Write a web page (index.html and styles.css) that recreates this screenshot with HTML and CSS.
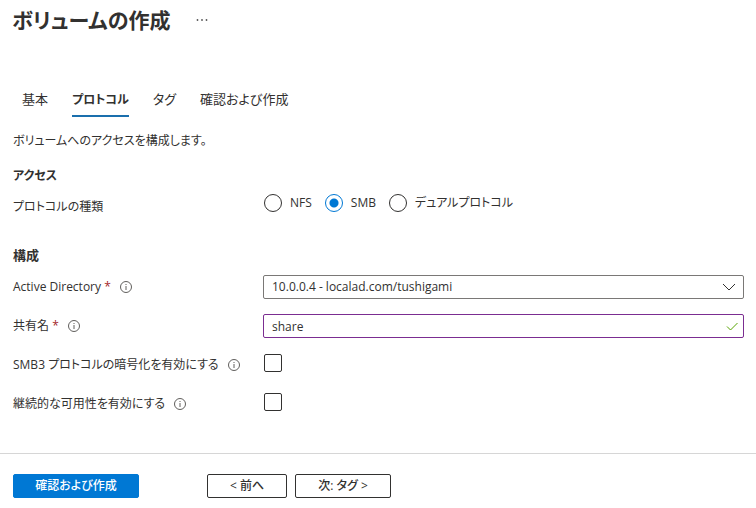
FILE: index.html
```html
<!DOCTYPE html>
<html lang="ja">
<head>
    <meta charset="UTF-8">
    <meta name="viewport" content="width=device-width, initial-scale=1.0">
    <title>ボリュームの作成</title>
    <link rel="stylesheet" href="styles.css">
</head>
<body>
    <header class="page-header">
        <h1>ボリュームの作成</h1>
        <button type="button" class="more" aria-label="その他">
            <svg width="12" height="4" viewBox="0 0 12 4" fill="#555"><circle cx="1.5" cy="2" r="0.9"/><circle cx="6" cy="2" r="0.9"/><circle cx="10.5" cy="2" r="0.9"/></svg>
        </button>
    </header>
    <nav class="tabs">
        <a href="#basic">基本</a>
        <a href="#protocol" class="active">プロトコル</a>
        <a href="#tags">タグ</a>
        <a href="#review">確認および作成</a>
    </nav>
    <form>
        <main>
            <p class="description">ボリュームへのアクセスを構成します。</p>
            <section class="access">
                <h2>アクセス</h2>
                <div class="row" role="radiogroup" aria-labelledby="protocol-label">
                    <span class="label" id="protocol-label">プロトコルの種類</span>
                    <div class="radios">
                        <label><input type="radio" name="protocol" value="nfs">NFS</label>
                        <label><input type="radio" name="protocol" value="smb" checked>SMB</label>
                        <label><input type="radio" name="protocol" value="dual">デュアルプロトコル</label>
                    </div>
                </div>
            </section>
            <section class="settings">
                <h2>構成</h2>
                <div class="row">
                    <div class="label">
                        <label for="directory">Active Directory <span class="required">*</span></label>
                        <svg class="info" viewBox="0 0 12 12"><circle cx="6" cy="6" r="5.5"/><path d="M6 5v4M6 3v1"/></svg>
                    </div>
                    <div class="field">
                        <select id="directory" name="directory">
                            <option>10.0.0.4 - localad.com/tushigami</option>
                        </select>
                        <svg class="chevron" viewBox="0 0 14 8"><path d="M1 1l6 6 6-6"/></svg>
                    </div>
                </div>
                <div class="row">
                    <div class="label">
                        <label for="share">共有名 <span class="required">*</span></label>
                        <svg class="info" viewBox="0 0 12 12"><circle cx="6" cy="6" r="5.5"/><path d="M6 5v4M6 3v1"/></svg>
                    </div>
                    <div class="field">
                        <input type="text" id="share" name="share" value="share" class="edited">
                        <svg class="valid" viewBox="0 0 12 9"><path d="M1 4.5l3.5 3.5 7-7"/></svg>
                    </div>
                </div>
                <div class="row">
                    <div class="label">
                        <label for="encryption">SMB3 プロトコルの暗号化を有効にする</label>
                        <svg class="info" viewBox="0 0 12 12"><circle cx="6" cy="6" r="5.5"/><path d="M6 5v4M6 3v1"/></svg>
                    </div>
                    <input type="checkbox" id="encryption" name="encryption">
                </div>
                <div class="row">
                    <div class="label">
                        <label for="availability">継続的な可用性を有効にする</label>
                        <svg class="info" viewBox="0 0 12 12"><circle cx="6" cy="6" r="5.5"/><path d="M6 5v4M6 3v1"/></svg>
                    </div>
                    <input type="checkbox" id="availability" name="availability">
                </div>
            </section>
        </main>
        <footer>
            <button type="submit" class="btn primary">確認および作成</button>
            <button type="button" class="btn previous">&lt; 前へ</button>
            <button type="button" class="btn next">次: タグ &gt;</button>
        </footer>
    </form>
</body>
</html>
```
FILE: styles.css
```css
* {
    box-sizing: border-box;
}
body {
    margin: 0;
    font-family: "Open Sans", "Noto Sans CJK JP", sans-serif;
    font-size: 12px;
    line-height: 20px;
    font-feature-settings: "palt";
    color: #323130;
    background-color: #fff;
}
h1, h2, p {
    margin: 0;
}
input, select, button {
    font: inherit;
    font-feature-settings: inherit;
    color: inherit;
    margin: 0;
}
.page-header {
    display: flex;
    align-items: center;
    gap: 20px;
    height: 40px;
    padding: 0 12px;
}
h1 {
    font-size: 21px;
    line-height: 38px;
    font-weight: 600;
}
.more {
    display: flex;
    padding: 6px;
    border: none;
    background: none;
}
.tabs {
    display: flex;
    gap: 24px;
    padding: 49px 22px 0;
    font-size: 13px;
}
.tabs a {
    height: 28px;
    color: inherit;
    text-decoration: none;
}
.tabs .active {
    font-size: 12px;
    line-height: 22px;
    font-weight: 600;
    border-bottom: 2px solid #1a6fad;
}
main {
    padding: 14px 12px 0 13px;
}
h2 {
    font-size: 12px;
    line-height: 20px;
    font-weight: 600;
}
.access {
    padding-top: 15px;
}
.access .row {
    margin-top: 7px;
}
.access .label {
    line-height: 28px;
}
.settings {
    display: flex;
    flex-direction: column;
    gap: 10px;
    padding-top: 24px;
}
.settings h2 {
    font-size: 13px;
}
.row {
    display: grid;
    grid-template-columns: 250px 1fr;
    min-height: 24px;
}
.settings .row + .row {
    margin-top: 5px;
}
.label {
    display: flex;
    align-items: center;
    gap: 9px;
    line-height: 24px;
}
.required {
    color: #a4262c;
}
.info {
    width: 12px;
    height: 12px;
    fill: none;
    stroke: #605e5c;
}
.radios {
    display: flex;
    align-items: flex-start;
    gap: 12px;
}
.radios label {
    display: flex;
    gap: 7px;
    line-height: 20px;
}
input[type="radio"] {
    appearance: none;
    width: 18px;
    height: 18px;
    margin: 1px;
    border: 1px solid #323130;
    border-radius: 50%;
}
input[type="radio"]:checked {
    border-color: #0078d4;
    background: radial-gradient(circle, #0078d4 4px, transparent 5px);
}
input[type="checkbox"] {
    appearance: none;
    width: 18px;
    height: 18px;
    margin: 1px;
    border: 1px solid #323130;
    border-radius: 2px;
}
.field {
    position: relative;
}
.field select, .field input {
    display: block;
    appearance: none;
    width: 100%;
    height: 24px;
    padding: 0 30px 0 8px;
    border: 1px solid #7a7876;
    border-radius: 2px;
    background-color: #fff;
    outline: none;
}
.field .edited {
    border-color: #7b2d91;
}
.chevron, .valid {
    position: absolute;
    fill: none;
    pointer-events: none;
}
.chevron {
    top: 8px;
    right: 8px;
    width: 14px;
    height: 8px;
    stroke: #323130;
}
.valid {
    top: 8px;
    right: 6px;
    width: 12px;
    height: 9px;
    stroke: #57a300;
}
footer {
    display: flex;
    gap: 8px;
    margin-top: 37px;
    padding: 20px 13px;
    border-top: 1px solid #d6d6d6;
}
.btn {
    height: 24px;
    padding: 0;
    line-height: 20px;
    font-weight: 500;
    border: 1px solid #323130;
    border-radius: 2px;
    background-color: #fff;
}
.primary {
    width: 126px;
    margin-right: 60px;
    border-color: #0078d4;
    background-color: #0078d4;
    color: #fff;
}
.previous {
    width: 80px;
}
.next {
    width: 96px;
}
```
